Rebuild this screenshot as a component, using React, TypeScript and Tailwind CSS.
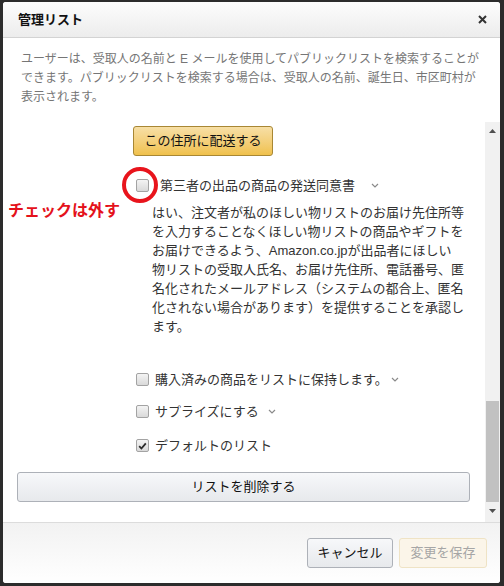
import React from "react";

const paragraphLines = [
  "はい、注文者が私のほしい物リストのお届け先住所等",
  "を入力することなくほしい物リストの商品やギフトを",
  "お届けできるよう、Amazon.co.jpが出品者にほしい",
  "物リストの受取人氏名、お届け先住所、電話番号、匿",
  "名化されたメールアドレス（システムの都合上、匿名",
  "化されない場合があります）を提供することを承認し",
  "ます。",
];

const descriptionLines = [
  "ユーザーは、受取人の名前と E メールを使用してパブリックリストを検索することが",
  "できます。パブリックリストを検索する場合は、受取人の名前、誕生日、市区町村が",
  "表示されます。",
];

function Chevron({ className = "" }: { className?: string }) {
  return (
    <svg width="8" height="5" viewBox="0 0 8 5" className={className}>
      <path d="M1 1l3 3 3-3" fill="none" stroke="#8a8a8a" strokeWidth="1.2" />
    </svg>
  );
}

function CheckBox({ checked = false }: { checked?: boolean }) {
  return (
    <span className="flex h-[13px] w-[13px] shrink-0 items-center justify-center rounded-[2px] border border-[#a3a3a3] bg-linear-to-b from-[#f4f4f4] to-[#d9d9d9]">
      {checked && (
        <svg width="9" height="8" viewBox="0 0 9 8">
          <path d="M1.2 4.2l2.2 2.3L7.8 1.3" fill="none" stroke="#2a2a2a" strokeWidth="1.8" />
        </svg>
      )}
    </span>
  );
}

export default function App() {
  return (
    <div className="relative h-[586px] w-[504px] bg-[#2c2c2c] pb-[3px] pl-[3px] pr-[4px] pt-[2px] font-['Liberation_Sans','Noto_Sans_CJK_JP',sans-serif] text-[13px] text-[#333]">
      <div className="flex h-full flex-col overflow-hidden rounded-[3px] bg-white">
        {/* header */}
        <div className="flex h-[36px] shrink-0 items-center justify-between border-b border-[#d3d3d3] bg-linear-to-b from-[#fdfdfd] to-[#ececec] pl-[15px] pr-[13px]">
          <span className="font-bold text-[13px] text-[#111]">管理リスト</span>
          <svg width="9" height="9" viewBox="0 0 9 9">
            <path d="M1 1l7 7M8 1L1 8" stroke="#333" strokeWidth="2" />
          </svg>
        </div>

        {/* description */}
        <div className="h-[84px] shrink-0 pl-[18px] pt-[12px] text-[12px] leading-[19px] text-[#767676]">
          {descriptionLines.map((line) => (
            <div key={line} className="whitespace-nowrap">
              {line}
            </div>
          ))}
        </div>

        {/* scroll area */}
        <div className="flex h-[400px] shrink-0">
          <div className="flex-1 pt-[4px]">
            <button className="ml-[130px] flex h-[30px] w-[140px] items-center justify-center rounded-[3px] border border-[#a88734] bg-linear-to-b from-[#f7dfa5] to-[#f0c14b] text-[13px] text-[#111]">
              この住所に配送する
            </button>

            <div className="ml-[133px] mt-[20px] flex h-[19px] items-center">
              <CheckBox />
              <span className="ml-[11px]">第三者の出品の商品の発送同意書</span>
              <Chevron className="ml-[16px]" />
            </div>

            <div className="ml-[149px] mt-[8px] leading-[19px]">
              {paragraphLines.map((line) => (
                <div key={line} className="whitespace-nowrap">
                  {line}
                </div>
              ))}
            </div>

            <div className="ml-[133px] mt-[34px] flex h-[19px] items-center">
              <CheckBox />
              <span className="ml-[6px]">購入済みの商品をリストに保持します。</span>
              <Chevron className="ml-[3px]" />
            </div>

            <div className="ml-[133px] mt-[13px] flex h-[19px] items-center">
              <CheckBox />
              <span className="ml-[6px]">サプライズにする</span>
              <Chevron className="ml-[9px]" />
            </div>

            <div className="ml-[133px] mt-[15px] flex h-[19px] items-center">
              <CheckBox checked />
              <span className="ml-[6px]">デフォルトのリスト</span>
            </div>

            <button className="ml-[14px] mt-[17px] flex h-[30px] w-[453px] items-center justify-center rounded-[3px] border border-[#adb1b8] bg-linear-to-b from-[#f7f8fa] to-[#e7e9ec] text-[13px] text-[#111]">
              リストを削除する
            </button>
          </div>

          {/* scrollbar */}
          <div className="flex w-[15px] flex-col items-center bg-[#f1f1f1]">
            <div className="flex h-[17px] w-full items-center justify-center">
              <svg width="7" height="4" viewBox="0 0 7 4">
                <path d="M0 4L3.5 0 7 4z" fill="#505050" />
              </svg>
            </div>
            <div className="flex-1" />
            <div className="h-[101px] w-[13px] bg-[#c1c1c1]" />
            <div className="flex h-[17px] w-full items-center justify-center">
              <svg width="7" height="4" viewBox="0 0 7 4">
                <path d="M0 0L3.5 4 7 0z" fill="#505050" />
              </svg>
            </div>
            <div className="h-[3px]" />
          </div>
        </div>

        {/* footer */}
        <div className="flex flex-1 justify-end gap-[6px] border-t border-[#dcdcdc] bg-linear-to-b from-[#f2f2f2] to-white pr-[13px] pt-[15px]">
          <button className="flex h-[30px] w-[86px] items-center justify-center rounded-[3px] border border-[#adb1b8] bg-linear-to-b from-[#f7f8fa] to-[#e7e9ec] text-[13px] text-[#111]">
            キャンセル
          </button>
          <button className="flex h-[30px] w-[88px] items-center justify-center rounded-[3px] border border-[#efe3c5] bg-[#fbf5e9] text-[13px] text-[#a6a6a6]">
            変更を保存
          </button>
        </div>
      </div>

      {/* annotation overlay */}
      <div className="absolute left-[122px] top-[167px] h-[36px] w-[36px] rounded-full border-[4px] border-[#e8141c]" />
      <div className="absolute left-[8px] top-[201px] text-[16px] font-bold leading-[20px] text-[#e4121b]">
        チェックは外す
      </div>
    </div>
  );
}
